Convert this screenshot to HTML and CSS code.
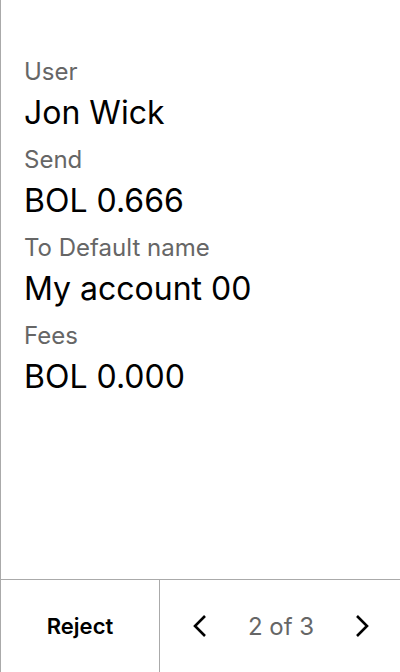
FILE: index.html
```html
<!DOCTYPE html>
<html>
<head>
<meta charset="utf-8">
<link rel="stylesheet" href="styles.css">
</head>
<body>
<div class="screen">
  <main class="details">
    <div class="label">User</div>
    <div class="value">Jon Wick</div>
    <div class="label">Send</div>
    <div class="value">BOL 0.666</div>
    <div class="label">To Default name</div>
    <div class="value">My account 00</div>
    <div class="label">Fees</div>
    <div class="value">BOL 0.000</div>
  </main>
  <footer class="footer">
    <button class="reject">Reject</button>
    <div class="pager">
      <svg class="chev" width="16" height="22" viewBox="0 0 16 22"><path d="M13 1 L3 11 L13 21" fill="none" stroke="#000" stroke-width="2.6"/></svg>
      <span class="count">2 of 3</span>
      <svg class="chev" width="16" height="22" viewBox="0 0 16 22"><path d="M3 1 L13 11 L3 21" fill="none" stroke="#000" stroke-width="2.6"/></svg>
    </div>
  </footer>
</div>
</body>
</html>
```
FILE: styles.css
```css
html, body {
  margin: 0;
  padding: 0;
  background: #fff;
}
body {
  font-family: Inter, "Noto Sans", sans-serif;
  color: #000;
}
.screen {
  width: 400px;
  height: 672px;
  box-sizing: border-box;
  border-left: 1px solid #aaa;
  display: flex;
  flex-direction: column;
}
.details {
  flex: 1;
  padding: 57px 0 0 23px;
  display: flex;
  flex-direction: column;
}
.label {
  font-size: 24px;
  line-height: 30px;
  height: 30px;
  color: #666;
}
.value {
  font-size: 32px;
  line-height: 51px;
  height: 51px;
  padding-bottom: 7px;
}
.footer {
  height: 92px;
  border-top: 1px solid #aaa;
  display: flex;
}
.reject {
  width: 159px;
  border: none;
  border-right: 1px solid #aaa;
  background: none;
  font-family: Inter, sans-serif;
  font-size: 22px;
  font-weight: 600;
  color: #000;
  padding: 0;
}
.pager {
  flex: 1;
  display: flex;
  align-items: center;
  justify-content: space-between;
  padding: 0 30px 0 32px;
}
.count {
  font-size: 24px;
  color: #666;
}
.chev {
  display: block;
}
```
